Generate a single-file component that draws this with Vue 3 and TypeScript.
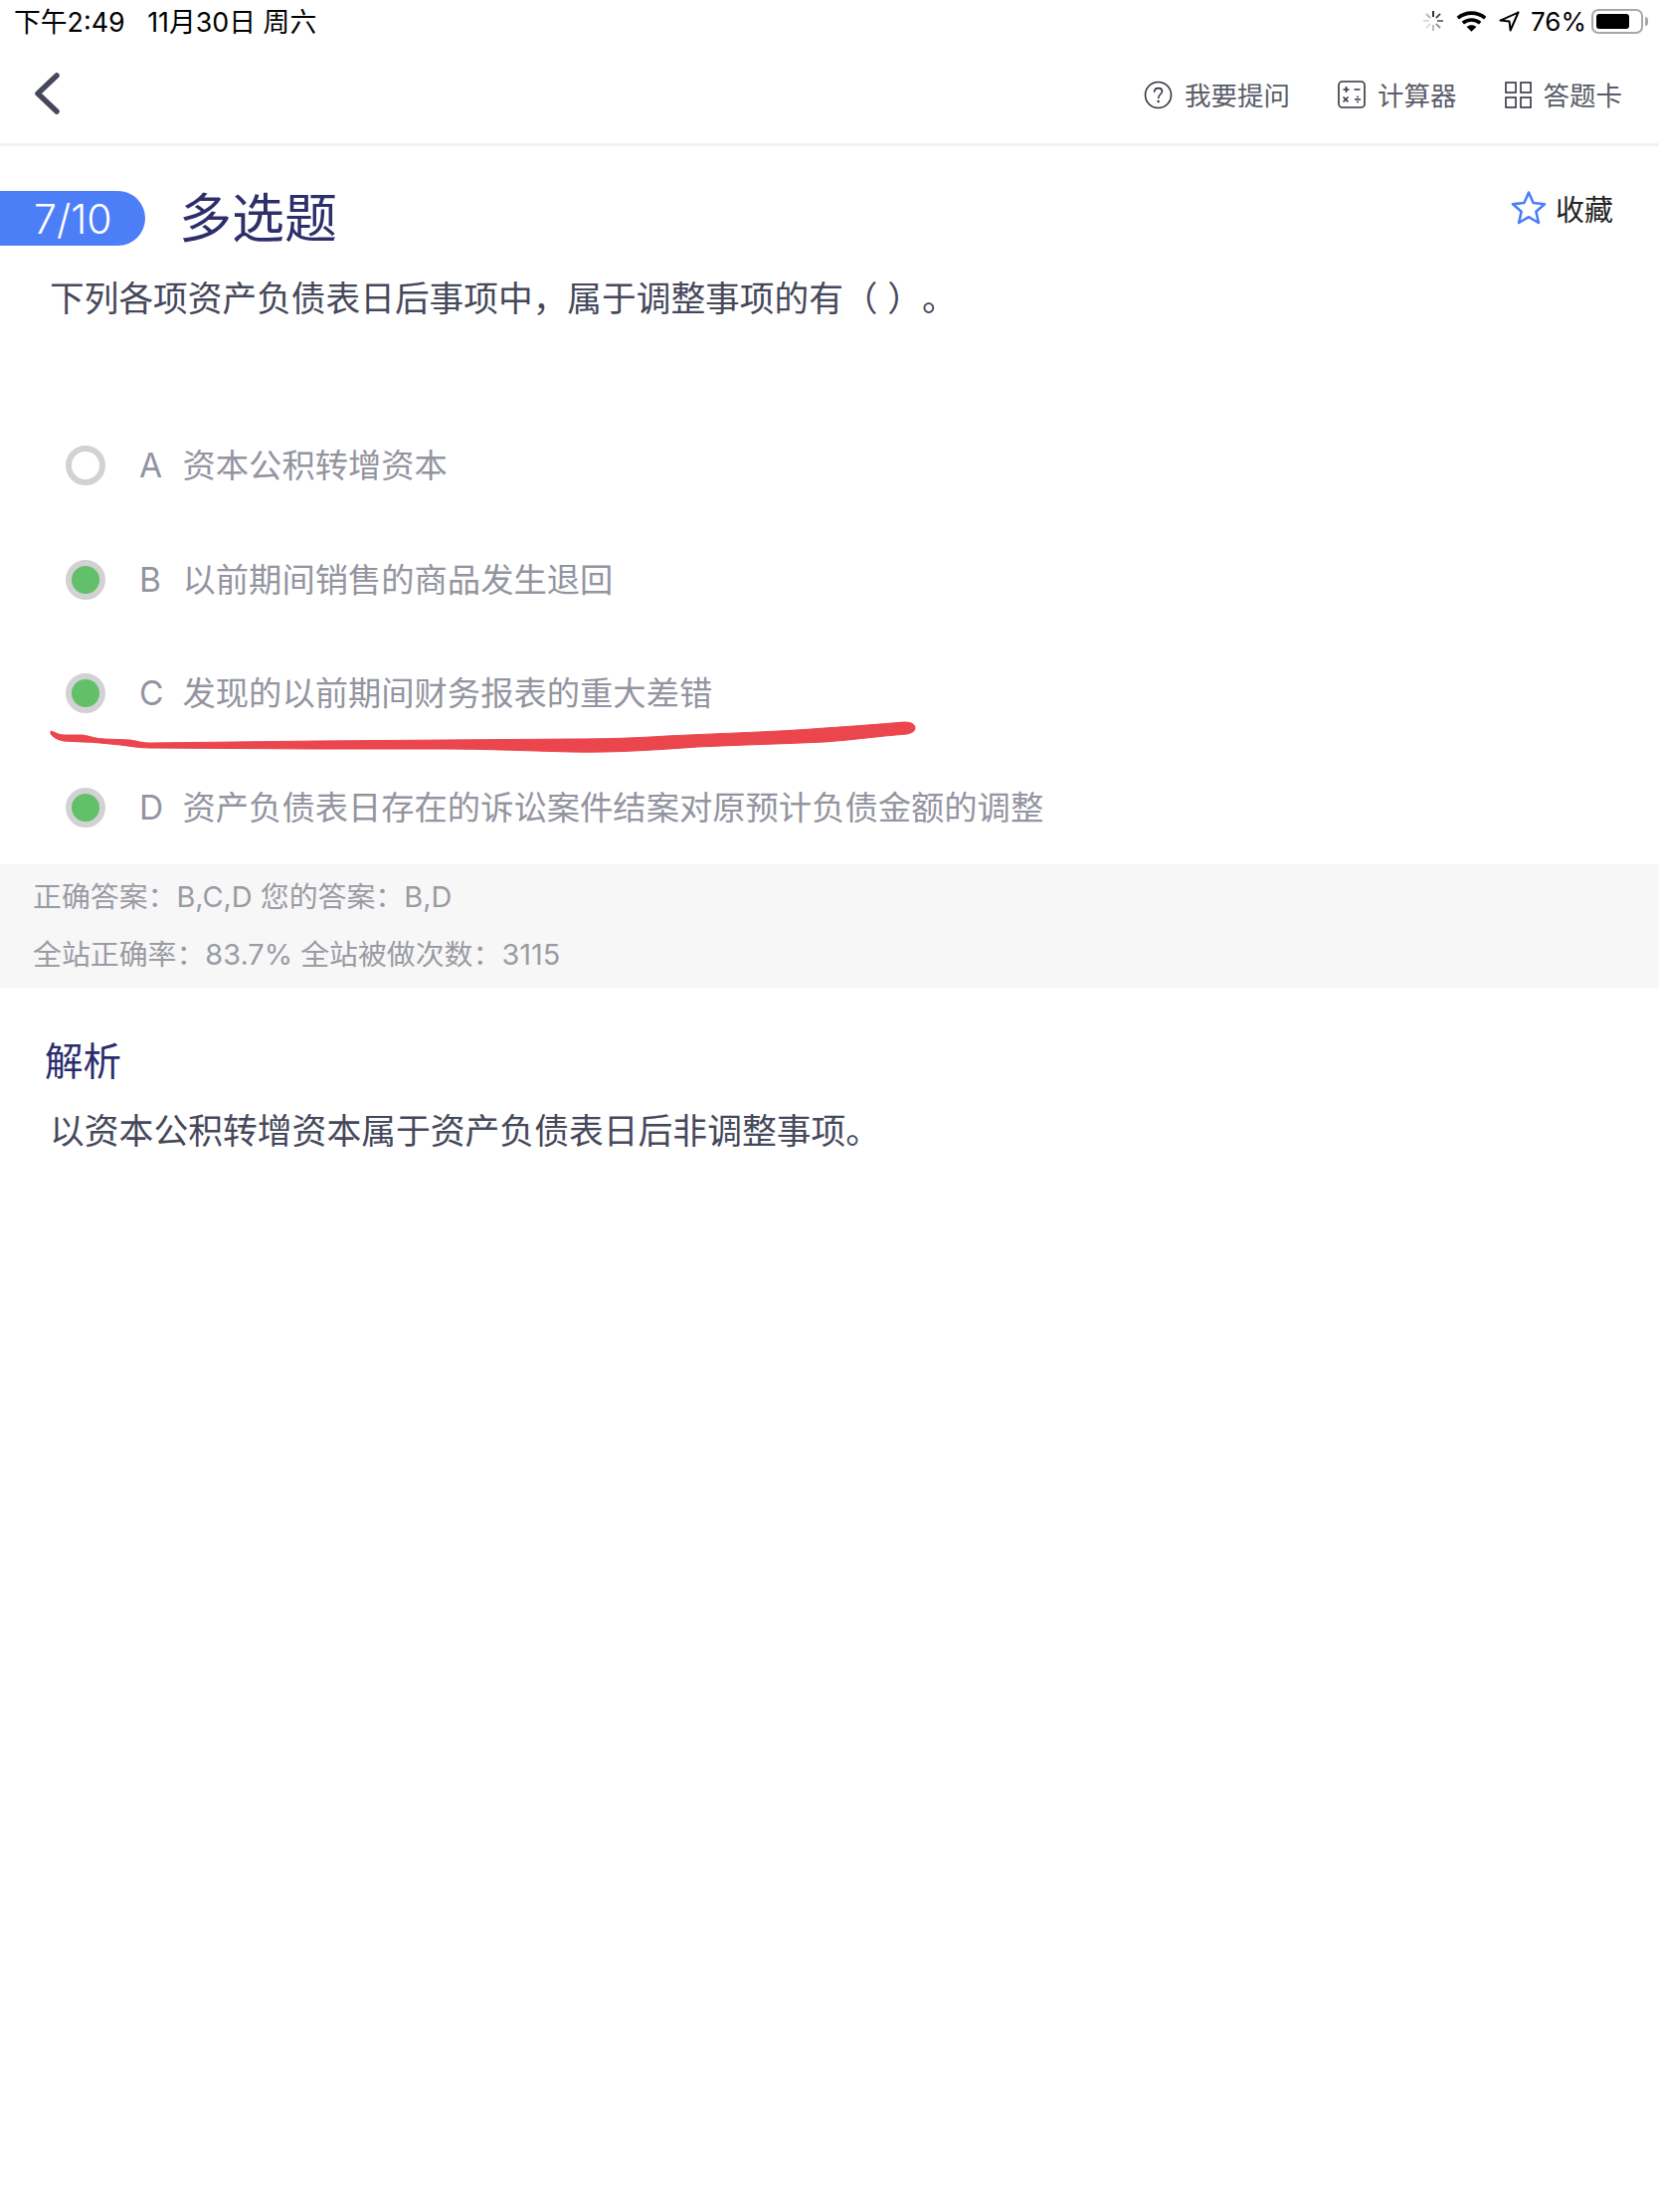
<template>
  <div class="page">
    <div class="status-bar">
      <div class="status-time">下午2:49&nbsp;&nbsp;&nbsp;11月30日 周六</div>
      <div class="status-right">
        <svg class="spinner" width="22" height="22" viewBox="0 0 22 22">
          <line v-for="(o, i) in spinnerTicks" :key="i" x1="11" y1="1" x2="11" y2="7" stroke="#000" stroke-width="1.8"
            :stroke-opacity="o" :transform="`rotate(${i * 45} 11 11)`" />
        </svg>
        <svg class="wifi" width="31" height="23" viewBox="0 0 31 23" fill="none" stroke="#000" stroke-width="3.6">
          <path d="M1.8 8.2C9.6 1.4 21.4 1.4 29.2 8.2" />
          <path d="M6.8 13.2C11.8 9 19.2 9 24.2 13.2" />
          <path d="M15.5 21.8L10.6 16.9C13.4 14.8 17.6 14.8 20.4 16.9Z" fill="#000" stroke="none" />
        </svg>
        <svg class="loc" width="21" height="21" viewBox="0 0 21 21" fill="none" stroke="#000" stroke-width="2"
          stroke-linejoin="round">
          <path d="M19.5 1.5L1.5 9.6L10.6 10.6L11.6 19.5Z" />
        </svg>
        <span class="battery-text">76%</span>
        <div class="battery">
          <div class="battery-shell">
            <div class="battery-fill"></div>
          </div>
          <div class="battery-nub"></div>
        </div>
      </div>
    </div>

    <div class="nav">
      <svg class="back" width="30" height="46" viewBox="0 0 30 46" fill="none" stroke="#45485a" stroke-width="5.5"
        stroke-linecap="round" stroke-linejoin="round">
        <path d="M25 5L6 23L25 41" />
      </svg>
      <div class="nav-actions">
        <div class="nav-item">
          <svg width="29" height="29" viewBox="0 0 29 29" fill="none" stroke="#33353f" stroke-width="1.6">
            <circle cx="14.5" cy="14.5" r="13" />
            <path d="M10.6 11.2C10.8 8.8 12.5 7.6 14.6 7.6C16.8 7.6 18.4 9 18.4 11C18.4 13.6 14.7 14 14.7 17.4"
              stroke-linecap="round" />
            <circle cx="14.6" cy="21" r="1.2" fill="#33353f" stroke="none" />
          </svg>
          <span>我要提问</span>
        </div>
        <div class="nav-item">
          <svg width="28" height="28" viewBox="0 0 28 28" fill="none" stroke="#33353f" stroke-width="1.6">
            <rect x="1" y="1" width="26" height="26" rx="3.5" />
            <path d="M5.5 9H11.5M8.5 6V12M16.5 9H22.5M5.5 16.5L10.5 21.5M10.5 16.5L5.5 21.5M17 19H23" />
            <circle cx="20" cy="16.5" r="0.9" fill="#33353f" stroke="none" />
            <circle cx="20" cy="21.5" r="0.9" fill="#33353f" stroke="none" />
          </svg>
          <span>计算器</span>
        </div>
        <div class="nav-item">
          <svg width="27" height="27" viewBox="0 0 27 27" fill="none" stroke="#33353f" stroke-width="1.6">
            <rect x="1" y="1" width="10" height="10" />
            <rect x="16" y="1" width="10" height="10" />
            <rect x="1" y="16" width="10" height="10" />
            <rect x="16" y="16" width="10" height="10" />
          </svg>
          <span>答题卡</span>
        </div>
      </div>
    </div>

    <div class="head">
      <div class="badge">7/10</div>
      <div class="title">多选题</div>
      <div class="collect">
        <svg width="36" height="36" viewBox="0 0 36 36" fill="none" stroke="#4c7ef8" stroke-width="2.6"
          stroke-linejoin="round">
          <path d="M18 2.5L22.6 13L34 14.2L25.4 21.8L27.9 33L18 27.2L8.1 33L10.6 21.8L2 14.2L13.4 13Z" />
        </svg>
        <span>收藏</span>
      </div>
    </div>

    <div class="question">下列各项资产负债表日后事项中，属于调整事项的有（ ）。</div>

    <div class="options">
      <div v-for="opt in options" :key="opt.key" class="option">
        <div class="radio" :class="{ checked: opt.checked }"></div>
        <span class="opt-key">{{ opt.key }}</span>
        <span class="opt-text">{{ opt.text }}</span>
      </div>
      <!-- hand drawn annotation on top of the screenshot -->
      <svg class="scribble" width="890" height="40" viewBox="0 0 890 40">
        <path fill="#eb464e" stroke="#eb464e" stroke-width="1" stroke-linejoin="round"
          d="M1 10C5 11 9 14 14 14L33 14C40 15 47 18 55 18L81 19C88 20 93 22 100 22L269 20L524 18C560 18 590 17 620 15C680 12 730 11 779 7C810 5 835 3 859 1C866 1 870 3 870 7C870 10 867 12 862 13C835 15 808 19 779 21C735 23 695 24 651 26C610 29 565 32 524 31C480 30 440 28 396 28L269 28L100 27C90 27 80 25 71 24C58 23 46 21 33 21L14 20C8 19 3 16 1 13Z" />
      </svg>
    </div>

    <div class="summary">
      <div>正确答案：B,C,D 您的答案：B,D</div>
      <div>全站正确率：83.7% 全站被做次数：3115</div>
    </div>

    <div class="analysis">
      <div class="analysis-title">解析</div>
      <div class="analysis-body">以资本公积转增资本属于资产负债表日后非调整事项。</div>
    </div>
  </div>
</template>

<script setup lang="ts">
interface Option {
  key: string
  text: string
  checked: boolean
}

const spinnerTicks = [0.9, 0.75, 0.6, 0.45, 0.3, 0.15, 0.15, 0.3]

const options: Option[] = [
  { key: 'A', text: '资本公积转增资本', checked: false },
  { key: 'B', text: '以前期间销售的商品发生退回', checked: true },
  { key: 'C', text: '发现的以前期间财务报表的重大差错', checked: true },
  { key: 'D', text: '资产负债表日存在的诉讼案件结案对原预计负债金额的调整', checked: true },
]
</script>

<style>
html,
body {
  background: #fff;
}
</style>

<style scoped>
.page {
  width: 1668px;
  min-height: 2224px;
  background: #fff;
  font-family: Inter, "Noto Sans CJK SC", sans-serif;
  color: #45485a;
  text-spacing-trim: space-all;
}

.status-bar {
  height: 44px;
  padding: 0 11px 0 14px;
  display: flex;
  align-items: center;
  justify-content: space-between;
  color: #000;
  box-sizing: border-box;
}

.status-time {
  margin-bottom: 4px;
  font-size: 26.8px;
  white-space: nowrap;
}

.status-right {
  margin-bottom: 2px;
  display: flex;
  align-items: center;
}

.spinner {
  margin-right: 12px;
}

.wifi {
  margin-right: 12px;
}

.loc {
  margin-right: 11px;
}

.battery-text {
  font-size: 26px;
  margin-right: 5px;
}

.battery {
  display: flex;
  align-items: center;
}

.battery-shell {
  width: 52px;
  height: 25px;
  border: 2px solid #a8a8a8;
  border-radius: 7px;
  padding: 3px;
  box-sizing: border-box;
}

.battery-fill {
  width: 33px;
  height: 100%;
  background: #000;
  border-radius: 3px;
}

.battery-nub {
  width: 3px;
  height: 9px;
  margin-left: 2px;
  background: #a8a8a8;
  border-radius: 0 3px 3px 0;
}

.nav {
  height: 103px;
  padding: 0 37px 0 32px;
  display: flex;
  align-items: center;
  justify-content: space-between;
  border-bottom: 3px solid #f2f2f2;
  box-sizing: border-box;
}

.back {
  display: block;
}

.nav-actions {
  display: flex;
  align-items: center;
  gap: 48px;
  margin-top: 2px;
}

.nav-item {
  display: flex;
  align-items: center;
  gap: 12px;
  font-size: 26.5px;
  line-height: 36px;
  color: #5a5c68;
}

.nav-item span {
  padding-top: 1px;
}

.nav-item svg {
  display: block;
}

.head {
  margin-top: 45px;
  height: 55px;
  display: flex;
  align-items: center;
}

.badge {
  width: 146px;
  height: 55px;
  padding-left: 34px;
  box-sizing: border-box;
  background: #4c7ef8;
  border-radius: 0 28px 28px 0;
  color: #fff;
  font-size: 41px;
  font-weight: 300;
  line-height: 57px;
}

.title {
  margin-left: 34px;
  margin-top: 2px;
  font-size: 53px;
  line-height: 55px;
  color: #2d2f6b;
}

.collect {
  margin-left: auto;
  margin-right: 46px;
  margin-top: -21px;
  display: flex;
  align-items: center;
  gap: 9px;
  font-size: 29px;
  color: #222;
}

.collect svg {
  display: block;
}

.question {
  margin-top: 28px;
  padding-left: 50px;
  font-size: 34.7px;
  line-height: 50px;
}

.options {
  position: relative;
  margin-top: 86px;
}

.option {
  height: 114.6px;
  padding-left: 66px;
  display: flex;
  align-items: center;
  color: #9394a0;
}

.radio {
  width: 40px;
  height: 40px;
  box-sizing: border-box;
  border-radius: 50%;
  border: 6px solid #d2d2d2;
  background: #fff;
  flex-shrink: 0;
}

.radio.checked {
  background: #62bf6a;
}

.opt-key {
  width: 43.5px;
  margin-left: 34px;
  font-size: 33.5px;
}

.opt-text {
  padding-bottom: 5px;
  font-size: 33.3px;
  white-space: nowrap;
}

.scribble {
  position: absolute;
  left: 50px;
  top: 314px;
}

.summary {
  padding: 4px 33px;
  background: #f7f7f7;
  color: #9a9ba3;
  font-size: 28.9px;
  line-height: 58px;
}

.analysis {
  margin-top: 49px;
}

.analysis-title {
  padding-left: 45px;
  font-size: 38.5px;
  line-height: 50px;
  color: #2a2c6e;
}

.analysis-body {
  margin-top: 20px;
  padding-left: 50px;
  font-size: 34.8px;
  line-height: 50px;
}
</style>
